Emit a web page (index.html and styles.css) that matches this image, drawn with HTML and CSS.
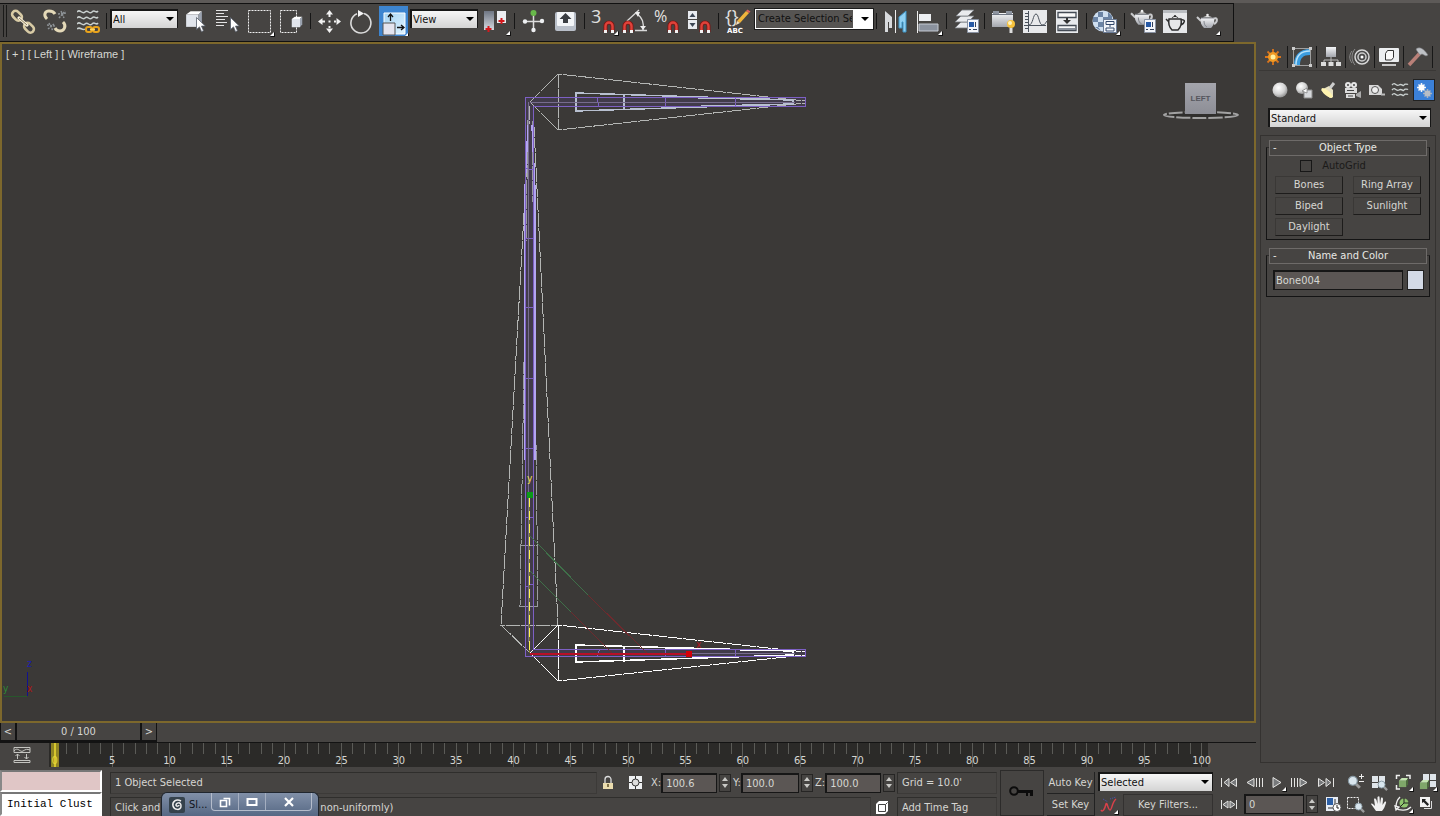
FILE: index.html
```html
<!DOCTYPE html>
<html lang="en">
<head>
    <title>Left - Wireframe</title>
    <meta charset="utf-8">
    <link rel="stylesheet" href="styles.css">
</head>
<body>
<svg class="defs" aria-hidden="true">
    <linearGradient id="steel" x2="0" y2="1"><stop stop-color="#f4f5f7"/><stop offset="1" stop-color="#a3a6ad"/></linearGradient>
    <linearGradient id="slate" x2="0" y2="1"><stop stop-color="#6f7683"/><stop offset="1" stop-color="#d5d9e0"/></linearGradient>
    <linearGradient id="sky" x2="1" y2="1"><stop stop-color="#a5d4f4"/><stop offset="1" stop-color="#dff3ff"/></linearGradient>
    <radialGradient id="ball" cx=".4" cy=".35" r=".7"><stop stop-color="#fff"/><stop offset=".6" stop-color="#d2d2d2"/><stop offset="1" stop-color="#888"/></radialGradient>
    <symbol id="magnet" viewBox="0 0 12 14">
        <path d="M2.5 12V6a3.5 3.5 0 0 1 7 0v6" fill="none" stroke="#7d1512" stroke-width="4"/>
        <path d="M2.5 10V6a3.5 3.5 0 0 1 7 0v4" fill="none" stroke="#e0423a" stroke-width="2.4"/>
        <path d="M1 10h3v3H1zM8 10h3v3H8z" fill="#f2f2f2"/>
    </symbol>
    <symbol id="cursor" viewBox="0 0 10 16">
        <path d="M.5.5v12l3-2.6 2 4.8 2-1-2-4.6h3.8z" fill="#fff" stroke="#555d6b" stroke-width=".8"/>
    </symbol>
    <symbol id="panel" viewBox="0 0 12 14">
        <path d="M.5.5h11v13H.5z" fill="#f4f6fa" stroke="#8a93a3"/>
        <path d="M2 3h5v5H2z" fill="#2759a5"/><path d="M8.500 3v5M2 10.500h2M6 10.500h4" stroke="#33405a"/>
    </symbol>
    <symbol id="teapot" viewBox="0 0 22 16">
        <path d="M5 8L1 4M17 6c5-3 5 3 1 5" fill="none" stroke="#c9cacc" stroke-width="2"/>
        <path d="M5 5h13c1 5-1 8-3 10H8C5 12 4 9 5 5z" fill="url(#steel)"/>
        <path d="M7 4.500c2-2 7-2 9 0z" fill="#ddd"/><circle cx="11.500" cy="2" r="1.300" fill="#eee"/>
        <path d="M8 8c0 3 1 5 3 6M5 5h13" fill="none" stroke="#85888e"/>
    </symbol>
    <symbol id="fly" viewBox="0 0 5 5"><path d="M5 0v5H0z" fill="#111"/><path d="M4 0v4H0z" fill="#fff"/></symbol>
    <symbol id="waves" viewBox="0 0 22 22">
        <path d="M0 3c3-4 5 3 8 0s4 3 7 0 4 2 6-1M0 9c3-4 5 3 8 0s4 3 7 0 4 2 6-1M0 15c3-4 5 3 8 0s4 3 7 0 4 2 6-1M0 20c3-3 5 2 8 0" fill="none" stroke="#c9d0cf" stroke-width="1.500"/>
    </symbol>
    <symbol id="box" viewBox="0 0 16 16">
        <path d="M1 4l4-3h10l-3 3z" fill="#fff"/><path d="M1 4h11v11H1z" fill="#e1e5ec"/><path d="M12 4l3-3v10l-3 4z" fill="#9ba3b0"/>
    </symbol>
    <symbol id="lens" viewBox="0 0 12 12">
        <path d="M7 7l4 4" stroke="#9a9a9a" stroke-width="2.500"/><circle cx="5" cy="5" r="3.800" fill="#d9e6ee" stroke="#8798a2"/>
    </symbol>
    <symbol id="cube" viewBox="0 0 12 12">
        <path d="M1 4l3-3h7L9 4z" fill="#c5e6b2"/><path d="M1 4h8v7H1z" fill="#7fa76a"/><path d="M9 4l2-3v7l-2 3z" fill="#4b6b3c"/>
    </symbol>
</svg>

<header class="toolbar">
    <div class="tools">
        <span class="grip"></span>
        <button class="tool" aria-label="Link"><svg><g fill="none" stroke="#d8cba5" stroke-width="2.600"><rect x="5" y="7" width="11" height="7" rx="3.500" transform="rotate(45 10 10)"/><rect x="17" y="19" width="11" height="7" rx="3.500" transform="rotate(45 22 22)"/></g><path d="M11 12l10 9" stroke="#f7efd8" stroke-width="3"/><path d="M12 13l8 7" stroke="#8a7d5e"/></svg></button>
        <button class="tool" aria-label="Unlink"><svg><g fill="none" stroke="#e4d9b8" stroke-width="3"><path d="M8 14c-4-4-2-8 2-8 3 0 5 1 6 3"/><path d="M24 17c4 4 1 9-3 9-2 0-4-1-5-3"/></g><path d="M19 9l8-1M20 13l6-7M22 6l3 7M8 20l8 1M9 24l6-5M10 18l4 8" stroke="#8d9296" stroke-width="1.500" stroke-dasharray="2 1"/></svg></button>
        <button class="tool" aria-label="Bind to Space Warp"><svg><use href="#waves" x="6" y="4" width="22" height="22"/><g fill="none" stroke="#e8a31c" stroke-width="2"><rect x="15" y="22" width="6" height="5" rx="2"/><rect x="22" y="22" width="6" height="5" rx="2"/></g><path d="M19 24.500h5" stroke="#ffd35c" stroke-width="2"/></svg></button>
        <i class="sep"></i>
        <span class="drop small"><select aria-label="Selection filter"><option>All</option></select></span>
        <button class="tool" aria-label="Select Object"><svg><use href="#box" x="6" y="5" width="18" height="18"/><use href="#cursor" x="17" y="12" width="10" height="16"/></svg></button>
        <button class="tool" aria-label="Select by Name"><svg><path d="M5 5.500h12M5 8.500h8M5 11.500h12M5 14.500h9M5 17.500h11M5 20.500h8" stroke="#e4e4e4"/><use href="#cursor" x="19" y="12" width="10" height="16"/></svg></button>
        <button class="tool" aria-label="Rectangular Selection Region"><svg><path d="M5.500 5.500h22v22h-22z" fill="none" stroke="#f0f0f0" stroke-dasharray="2 1"/><use href="#fly" x="27" y="27" width="5" height="5"/></svg></button>
        <button class="tool" aria-label="Window Crossing"><svg><path d="M5.500 5.500h16v22h-16z" fill="none" stroke="#f0f0f0" stroke-dasharray="2 1"/><use href="#box" x="16" y="11" width="12" height="12"/></svg></button>
        <i class="sep"></i>
        <button class="tool" aria-label="Select and Move"><svg><path d="M16.500 5l3.500 4.500h-7zM16.500 28l3.500-4.500h-7zM5 16.500L9.500 13v7zM28 16.500L23.500 13v7zM15.500 9h2v3h-2zM15.500 21h2v3h-2zM9 15.500h3v2H9zM21 15.500h3v2h-3zM15.500 15.500h2v2h-2z" fill="#f2f2f2"/></svg></button>
        <button class="tool" aria-label="Select and Rotate"><svg><path d="M19 8.500A10 10 0 1 1 12 8.800" fill="none" stroke="#dcdcdc" stroke-width="1.600"/><path d="M13 5l6 3.500-6 3.500z" fill="#f4f4f4"/></svg></button>
        <button class="tool on" aria-label="Select and Scale"><svg><path d="M7 7h21v21H7z" fill="url(#sky)" stroke="#fff"/><path d="M6 17h12v12H6z" fill="#e4e4ee" stroke="#555"/><path d="M13.500 15V9M11 11l2.500-3 2.500 3M20 21.500h6M24 19l3 2.500-3 2.500" fill="none" stroke="#111" stroke-width="1.300"/><use href="#fly" x="27" y="27" width="5" height="5"/></svg></button>
        <span class="drop small"><select aria-label="Reference coordinate system"><option>View</option></select></span>
        <button class="tool" aria-label="Use Pivot Point Center"><svg><path d="M5 6h10v19H5z" fill="url(#slate)"/><path d="M18 6h9v12h-9z" fill="#eceef2"/><path d="M9.500 21v6M6.500 24h6M22.500 13v6M19.500 16h6" stroke="#d4181c" stroke-width="2"/><use href="#fly" x="27" y="26" width="5" height="5"/></svg></button>
        <i class="sep"></i>
        <button class="tool" aria-label="Select and Manipulate"><svg><path d="M16.500 8v17M8 16.500h17" stroke="#ddd" stroke-width="1.500"/><circle cx="16.500" cy="8" r="3" fill="#68b84a"/><g fill="#eef0f2"><circle cx="8" cy="16.500" r="2.200"/><circle cx="25" cy="16" r="2.200"/><circle cx="16.500" cy="25" r="2.200"/></g></svg></button>
        <button class="tool" aria-label="Keyboard Shortcut Override"><svg><rect x="6" y="7" width="21" height="19" rx="2" fill="#b9bfc9"/><rect x="8" y="7" width="17" height="14" rx="1" fill="#f3f5f8"/><path d="M16.500 8l6 6h-3.500v4h-5v-4h-3.500z" fill="#3a3d42"/></svg></button>
        <i class="sep"></i>
        <button class="tool" aria-label="Snaps Toggle"><svg><text class="glyph" x="4" y="18">3</text><use href="#magnet" x="16" y="15" width="12" height="14"/><use href="#fly" x="27" y="26" width="5" height="5"/></svg></button>
        <button class="tool" aria-label="Angle Snap Toggle"><svg><path d="M8 16L20 5M17 8c7 5 8 10 7 17M16 25.500h12" fill="none" stroke="#d9d9d9" stroke-width="1.300"/><path d="M16 7l5 0-2 5zM21 21l3 4 3-4z" fill="#eee"/><use href="#magnet" x="3" y="15" width="12" height="14"/></svg></button>
        <button class="tool" aria-label="Percent Snap Toggle"><svg><text class="glyph pct" x="3" y="17">%</text><use href="#magnet" x="16" y="15" width="12" height="14"/></svg></button>
        <button class="tool" aria-label="Spinner Snap Toggle"><svg><path d="M5 6h9v8H5zM5 15h9v9H5z" fill="#e8ebf0"/><path d="M6.500 12L9.500 8l3 4zM6.500 18l3 4 3-4z" fill="#3c4654"/><use href="#magnet" x="16" y="15" width="12" height="14"/></svg></button>
        <i class="sep"></i>
        <button class="tool" aria-label="Edit Named Selection Sets"><svg><text class="glyph" x="4" y="18">{}</text><path d="M16 16l9-10 3 2-9 10z" fill="#f0b43c"/><path d="M25 6l1.500-1.500 3 2L28 8z" fill="#e0635a"/><path d="M16 16l-1 4 4-2z" fill="#f6e3c0"/><text class="abc" x="6" y="28">ABC</text></svg></button>
        <span class="drop named"><select aria-label="Named selection sets"><option>Create Selection Set</option></select></span>
        <i class="sep"></i>
        <button class="tool" aria-label="Mirror"><svg><path d="M6 6l7 6v11h-3v-6H9v10H6z" fill="#d8dadd"/><path d="M16.500 5v23" stroke="#eee"/><path d="M27 6l-7 6v11h3v-6h1v10h3z" fill="#8fd0f2" stroke="#3f95c6"/></svg></button>
        <button class="tool" aria-label="Align"><svg><path d="M6.500 6v22" stroke="#eee"/><path d="M8 9h12v7H8z" fill="#edeff2"/><path d="M8 19h19v7H8z" fill="#8b929e" stroke="#c5cad2"/><use href="#fly" x="27" y="26" width="5" height="5"/></svg></button>
        <i class="sep"></i>
        <button class="tool" aria-label="Layer Manager"><svg><g fill="#e9ebee" stroke="#777b82" stroke-width=".8"><path d="M6 23l6-6h13l-6 6z"/><path d="M6 17l6-6h13l-6 6z"/><path d="M7 11l6-6h12l-6 6z"/></g><use href="#panel" x="18" y="14" width="12" height="14"/></svg></button>
        <i class="sep"></i>
        <button class="tool" aria-label="Toggle Ribbon"><svg><path d="M5 8h21v14H5z" fill="url(#steel)"/><path d="M6 6h6v3H6zM19 6h6v3h-6z" fill="#8d94a0"/><path d="M5 9.500h21" stroke="#6f7683"/><circle cx="24" cy="19" r="4" fill="#f7c23c"/><circle cx="23" cy="18" r="2" fill="#fff2bd"/><path d="M22.500 23h3v5h-3z" fill="#ddd"/></svg></button>
        <button class="tool" aria-label="Curve Editor"><svg><path d="M4 5h24v23H4z" fill="#e8e9eb"/><path d="M9.500 6v21M5 20.500h22M6 8.500h3M6 11.500h3M6 14.500h3M6 17.500h3M6 23.500h3M10 20c4 0 4-11 7-11s3 12 7 11c2 0 3-3 4-4" fill="none" stroke="#4b525c"/></svg></button>
        <button class="tool" aria-label="Schematic View"><svg><path d="M5 5h22v23H5z" fill="#e8eaed"/><path d="M7 7.500h18v5H7zM7 20.500h18v5H7z" fill="#f9f9f9" stroke="#444b55" stroke-width="1.300"/><path d="M8 23h16v2H8z" fill="#89909a"/><path d="M16 13v3" stroke="#333" stroke-width="2"/><path d="M12 15h8l-4 4z" fill="#333"/></svg></button>
        <i class="sep"></i>
        <button class="tool" aria-label="Material Editor"><svg><circle cx="14" cy="16" r="10.500" fill="#cfdff0"/><path d="M9 7h5v5H9zM19 7l4 4v3h-4zM4 12h5v5H4zM14 12h5v5h-5zM9 17h5v5H9zM6 22h3l3 4z" fill="#6b84a5"/><path d="M14.500 14.500h13v13h-13z" fill="#f2f5fa" stroke="#6b7c96"/><path d="M17 16.500h8v3h-8zM17 23h8v3h-8zM21 19v3" fill="none" stroke="#33486b"/><use href="#fly" x="27" y="26" width="5" height="5"/></svg></button>
        <i class="sep"></i>
        <button class="tool" aria-label="Render Setup"><svg><use href="#teapot" x="3" y="4" width="23" height="17"/><use href="#panel" x="17" y="14" width="12" height="14"/></svg></button>
        <button class="tool" aria-label="Rendered Frame Window"><svg><path d="M4 5h24v23H4z" fill="#e6e7e9"/><path d="M4 5h24v3H4z" fill="#b9bcc0"/><g fill="none" stroke="#2d2d2d"><path d="M10 14h12c1 5-1 9-3 11h-6c-3-3-4-6-3-11zM10 17l-3-3M22 15c5-1 4 3 0 5" stroke-width="1.500"/><path d="M13 13c1-2 5-2 6 0"/></g><circle cx="16" cy="11" r="1" fill="#222"/></svg></button>
        <button class="tool" aria-label="Render Production"><svg><use href="#teapot" x="5" y="8" width="22" height="16"/><use href="#fly" x="25" y="26" width="5" height="5"/></svg></button>
    </div>
</header>

<main class="workspace">
    <section class="stage">
        <div class="viewport">
            <svg class="scene">
                <g transform="translate(-2 -44)" fill="none" shape-rendering="crispEdges">
                    <path d="M526 98h279v8H534v543h271v8H526z" fill="#413b4a"/>
                    <!-- top bone -->
                    <path class="bone" d="M530 102L558 74L805 101M530 102L558 130L805 103M558 74v56"/>
                    <path class="fin" d="M793 100L576 93v18L793 104v-4M624 94v16M665 97l128 3M670 107l123-3"/>
                    <!-- spine bone -->
                    <path class="bone" d="M530 106L501 625h57L533 106M501 625l29 28 28-28"/>
                    <path class="bone dim" d="M528 120L520 606h18L532 120M521 545h17"/>
                    <path class="tube" d="M528 125L525 190v270M532 125L535 190v270"/>
                    <!-- selected bone -->
                    <path class="bone sel" d="M530 653L558 625L805 652M530 653L558 681L805 655M558 625v56"/>
                    <path class="fin sel" d="M793 651L576 645v17L793 655v-4M624 646v16M665 648l128 3M670 659l123-4"/>
                    <!-- skinned mesh -->
                    <path class="mesh" d="M525.500 97.500h280v9h-272v543h272v7h-280zM597 97l2 9M665.500 97v9M735.500 97v9M597 656l3-7M665.500 649v8M735.500 649v8M525 168l8 2M525 238h8M525 307h8M525 378h8M525 448h8M525 517h8M525 587l8-3"/>
                    <path class="mesh soft" d="M530 102.500h265M528.500 102v540M531 653.500h264"/>
                    <!-- scale gizmo -->
                    <path d="M530 536l58 59M530 571l41 41" stroke="#3f7049"/>
                    <path d="M588 595l59 58M571 612l41 41" stroke="#6e2a2e"/>
                    <path d="M530 654h158" stroke="#b81026" stroke-width="2"/>
                    <path d="M529.500 498v155" stroke="#77711f"/>
                    <path d="M529.500 498v155" stroke="#fff34a" stroke-dasharray="9 4"/>
                    <path d="M527 492h6v6h-6z" fill="#0b9b18"/>
                    <path d="M686 651h6v6h-6z" fill="#d40008"/>
                    <!-- world axis -->
                    <path d="M27.500 672v24" stroke="#12128e"/>
                    <path d="M4 696.500h23" stroke="#28572c"/>
                </g>
                <g transform="translate(-2 -44)" class="axis">
                    <text x="527" y="482" fill="#f5e14a">y</text>
                    <text x="696" y="648" fill="#b0101a">x</text>
                    <text x="27" y="667" fill="#1c1cb0">z</text>
                    <text x="27" y="692" fill="#b01414">x</text>
                    <text x="3" y="692" fill="#2d8a34">y</text>
                </g>
            </svg>
            <div class="label">[ + ] [ Left ] [ Wireframe ]</div>
            <div class="viewcube">
                <svg width="80" height="14"><ellipse cx="40" cy="6" rx="37" ry="3" fill="#302f2d" stroke="#a2a2a2" stroke-width="2" stroke-dasharray="14 2"/></svg>
                <span>LEFT</span>
            </div>
        </div>
        <div class="slider">
            <button class="step" aria-label="Previous frame">&lt;</button>
            <button class="thumb">0 / 100</button>
            <button class="step" aria-label="Next frame">&gt;</button>
        </div>
        <div class="track">
            <button class="mini" aria-label="Open Mini Curve Editor"><svg width="18" height="18"><path d="M1 1.500h16v5H1zM1 14.500h16v2H1zM1 5c4-5 6 2 9 0s4-2 7-1M4.500 13V8M2.500 10l2-2 2 2M13.500 8v5M11.500 11l2 2 2-2" fill="none" stroke="#c4c4c0"/></svg></button>
            <div class="ruler" id="ruler"></div>
        </div>
    </section>

    <aside class="command">
        <nav class="tabs">
            <button aria-label="Create"><svg><path d="M11 3v16M3 11h16M5.500 5.500l11 11M16.500 5.500l-11 11" stroke="#d9741c" stroke-width="1.800"/><circle cx="11" cy="11" r="5" fill="#f09a24"/><circle cx="11" cy="11" r="2.500" fill="#fff0a0"/></svg></button>
            <button aria-label="Modify"><svg><path d="M3 19C3 9 9 3 19 3v6C12 9 9 12 9 19z" fill="#3b9de0"/><path d="M5 19C5 10 10 5 19 5" fill="none" stroke="#b8e2fa" stroke-width="1.500"/><path d="M2.500 3v16M3 2.500h16M3 19.500h16.500V3" fill="none" stroke="#9fa0a0"/><path d="M1 1h3v3H1zM18 1h3v3h-3zM1 18h3v3H1zM18 18h3v3h-3z" fill="#ccc"/></svg></button>
            <button aria-label="Hierarchy"><svg><path d="M6 1h10v10H6z" fill="url(#steel)"/><path d="M11 11v6M4 17v-3h14v3" fill="none" stroke="#bbb"/><path d="M1 16h5v4H1zM8.500 16h5v4h-5zM16 16h5v4h-5z" fill="#ddd"/></svg></button>
            <button aria-label="Motion"><svg><path d="M3 5c-3 4-3 8 0 12M6 3c-4 5-4 11 0 16" fill="none" stroke="#8c8c8c"/><circle cx="13" cy="11" r="7" fill="#4a4a4a" stroke="#d8d8d8" stroke-width="1.500"/><circle cx="13" cy="11" r="4" fill="none" stroke="#ccc" stroke-width="1.500"/><circle cx="13" cy="11" r="1.500" fill="#fff"/></svg></button>
            <button aria-label="Display"><svg><rect x="1" y="2" width="20" height="14" rx="1" fill="#eceef0"/><path d="M4 18h14v2H4z" fill="#c9c9c9"/><path d="M7.500 7.500l2-3h6v7l-2 2.500h-6z" fill="#fafafa" stroke="#333"/></svg></button>
            <button aria-label="Utilities"><svg><path d="M2 19L14 6" stroke="#b98078" stroke-width="3.500"/><path d="M9 3c4-3 8 0 12 6l-2 1-4-2-2 1-3-4z" fill="#bfc2c6" stroke="#77797c" stroke-width=".6"/></svg></button>
        </nav>
        <div class="kinds">
            <button aria-label="Geometry"><svg><circle cx="11" cy="11" r="7.500" fill="url(#ball)"/></svg></button>
            <button aria-label="Shapes"><svg><circle cx="9" cy="9" r="6" fill="url(#ball)"/><path d="M11 11h8v8h-8z" fill="#d7d9dc" stroke="#8b8b8b"/><path d="M9 12l5-3v5z" fill="#fff" stroke="#777" stroke-width=".7"/></svg></button>
            <button aria-label="Lights"><svg><path d="M4 11l8-4 4 4v7l-3 1z" fill="#e9e2c3"/><ellipse cx="10" cy="14" rx="2.500" ry="7" transform="rotate(-50 10 14)" fill="#fff4b0"/><path d="M13 9l4-5" stroke="#ccc" stroke-width="3"/></svg></button>
            <button aria-label="Cameras"><svg><circle cx="7" cy="6" r="3" fill="#e6e6e6"/><circle cx="13" cy="6" r="3" fill="#e6e6e6"/><path d="M4 9h12v5H4zM5 15h9v4H5z" fill="#dcdcdc"/><path d="M15 15l5-3v7l-5-2z" fill="#ababab"/><circle cx="7" cy="6" r="1" fill="#444"/><circle cx="13" cy="6" r="1" fill="#444"/><path d="M6 11.500h7M7 17h5" stroke="#444"/></svg></button>
            <button aria-label="Helpers"><svg><path d="M4 6h9l4 4v6H4z" fill="#d8d8d8"/><circle cx="10" cy="11" r="3.500" fill="#eee" stroke="#555"/><path d="M16 15.500h4" stroke="#bbb" stroke-width="2"/></svg></button>
            <button aria-label="Space Warps"><svg><path d="M3 6c3-4 4 2 7 0s4 2 5 0 3 0 4-1M3 11c3-4 4 2 7 0s4 2 5 0 3 0 4-1M3 16c3-4 4 2 7 0s4 2 5 0 3 0 4-1" fill="none" stroke="#c9d0cf" stroke-width="1.300"/></svg></button>
            <button class="on" aria-label="Systems"><svg><g stroke="#f4f4f4" stroke-width="1.500"><path d="M8.500 4v9M4 8.500h9M5.500 5.500l6 6M11.500 5.500l-6 6"/></g><circle cx="8.500" cy="8.500" r="3" fill="#fff"/><g stroke="#a9b0ba" stroke-width="1.500"><path d="M14.500 10v9M10 14.500h9M11.500 11.500l6 6M17.500 11.500l-6 6"/></g><circle cx="14.500" cy="14.500" r="3" fill="#b8bdc6"/></svg></button>
        </div>
        <span class="drop wide"><select aria-label="System category"><option>Standard</option></select></span>
        <div class="rollouts">
            <section class="rollout">
                <h2>Object Type</h2>
                <label class="auto"><input type="checkbox" disabled>AutoGrid</label>
                <div class="types">
                    <button>Bones</button>
                    <button>Ring Array</button>
                    <button>Biped</button>
                    <button>Sunlight</button>
                    <button>Daylight</button>
                </div>
            </section>
            <section class="rollout">
                <h2>Name and Color</h2>
                <div class="name">
                    <input type="text" value="Bone004" aria-label="Object name">
                    <button class="swatch" aria-label="Object color"></button>
                </div>
            </section>
        </div>
    </aside>
</main>

<footer class="status">
    <div class="listener">
        <div class="macro"></div>
        <input type="text" value="Initial Clust" aria-label="MAXScript listener">
    </div>
    <div class="info">
        <div class="line">
            <p class="well grow">1 Object Selected</p>
            <button class="ico" aria-label="Selection Lock"><svg><path d="M8 11V7.500a3 3 0 0 1 6 0V11" fill="none" stroke="#ddd" stroke-width="1.300"/><path d="M6 11h10v6H6z" fill="#eadcae"/><path d="M11 12v3" stroke="#5b4d25" stroke-width="1.500"/></svg></button>
            <button class="ico gap" aria-label="Absolute Mode Transform"><svg><path d="M5 4h13v13H5z" fill="#eef0f2"/><circle cx="11.500" cy="10.500" r="3.500" fill="#ddd" stroke="#333"/><path d="M11.500 4v3M11.500 14v3M5 10.500h3M15 10.500h3" stroke="#333"/></svg></button>
            <label class="coord">X:<input type="text" value="100.6"><i class="spin"></i></label>
            <label class="coord">Y:<input type="text" value="100.0"><i class="spin"></i></label>
            <label class="coord">Z:<input type="text" value="100.0"><i class="spin"></i></label>
            <p class="well side">Grid = 10.0'</p>
        </div>
        <div class="line">
            <p class="well grow prompt"><span>Click and</span><span>non-uniformly)</span></p>
            <button class="ico tag" aria-label="Adaptive Degradation"><svg><path d="M5 7l3-3h9v10l-3 3H5z" fill="#fff"/><path d="M7.500 7.500h7v7h-7zM14.500 7.500l2-2" fill="#fdfdfd" stroke="#444"/></svg></button>
            <p class="well side">Add Time Tag</p>
        </div>
    </div>
    <button class="bigkey" aria-label="Set Keys"><svg width="26" height="12"><circle cx="5" cy="6" r="3.800" fill="none" stroke="#0c0c0c" stroke-width="2"/><path d="M9 5h15v6h-3V8h-2v3h-2V8H9z" fill="#0c0c0c"/></svg></button>
    <div class="keys">
        <button>Auto Key</button>
        <button>Set Key</button>
    </div>
    <div class="filters">
        <span class="drop keyset"><select aria-label="Key set"><option>Selected</option></select></span>
        <div class="line">
            <button class="ico" aria-label="Default tangents"><svg><path d="M3 16c2 3 4-2 5-6 1-3 2 6 4 6s2-8 6-11" fill="none" stroke="#d8414a" stroke-width="1.500"/><path d="M5 5l5 3M12 5l6-2" stroke="#4a54b8" stroke-dasharray="1 1"/><use href="#fly" x="16" y="16" width="5" height="5"/></svg></button>
            <button class="flat">Key Filters...</button>
        </div>
    </div>
    <div class="play">
        <div class="line">
            <button class="ico end" aria-label="Go to Start"><svg><path class="vcr" d="M3.500 7v9M11 7.500v8l-5-4zM18.500 7.500v8l-6-4z"/></svg></button>
            <button class="ico" aria-label="Previous Frame"><svg><path class="vcr" d="M10 7.500v8l-7-4zM12.500 7v9M15.500 7v9M18.500 7v9"/></svg></button>
            <button class="ico" aria-label="Play"><svg><path class="vcr" d="M7 6.500l8 5-8 5z"/><use href="#fly" x="16" y="16" width="5" height="5"/></svg></button>
            <button class="ico" aria-label="Next Frame"><svg><path class="vcr" d="M12 7.500v8l7-4zM3.500 7v9M6.500 7v9M9.500 7v9"/></svg></button>
            <button class="ico end" aria-label="Go to End"><svg><path class="vcr" d="M18.500 7v9M11 7.500v8l5-4zM3.500 7.500v8l6-4z"/></svg></button>
        </div>
        <div class="line">
            <button class="ico end" aria-label="Key Mode"><svg><path class="vcr" d="M3.500 7v9M10 8v7l-5-3.500zM12 8v7l5-3.500zM18.500 7v9"/></svg></button>
            <label class="coord frame"><input type="text" value="0" aria-label="Current frame"><i class="spin"></i></label>
            <button class="ico" aria-label="Time Configuration"><svg><path d="M4 4h12v14H4z" fill="#e8edf4"/><path d="M5 5h6v7H5z" fill="#2d60a6"/><path d="M13 6v6M6 15h5" stroke="#333"/><circle cx="15" cy="14.500" r="4" fill="#fff" stroke="#555"/><path d="M15 12v3h2" fill="none" stroke="#222"/></svg></button>
        </div>
    </div>
    <div class="nav">
        <button class="ico" aria-label="Zoom"><svg><use href="#lens" x="3" y="4" width="14" height="14"/><path d="M15 5.500h5M17.500 3v5M15 10.500h5" stroke="#eee"/></svg></button>
        <button class="ico" aria-label="Zoom All"><svg><path d="M4 5h6v6H4zM11 5h6v6h-6zM4 12h6v5H4z" fill="#dfe5ea"/><use href="#lens" x="9" y="9" width="11" height="11"/></svg></button>
        <button class="ico" aria-label="Zoom Extents"><svg><path d="M4.500 8V4.500H8M14 4.500h4V8M4.500 14v4H8" fill="none" stroke="#eee" stroke-width="1.500"/><use href="#cube" x="6" y="6" width="11" height="11"/><use href="#fly" x="17" y="16" width="5" height="5"/></svg></button>
        <button class="ico" aria-label="Zoom Extents All"><svg><path d="M7 3h6v6H7zM14 3h6v6h-6zM14 10h6v6h-6z" fill="#dfe5ea"/><use href="#cube" x="3" y="8" width="11" height="11"/><use href="#fly" x="17" y="16" width="5" height="5"/></svg></button>
        <button class="ico" aria-label="Zoom Region"><svg><path d="M3.500 4.500h11v11h-11z" fill="none" stroke="#eee" stroke-dasharray="2 1"/><use href="#lens" x="10" y="9" width="11" height="11"/></svg></button>
        <button class="ico" aria-label="Pan View"><svg><path d="M8 18l-5-7c1-1 2 0 4 2L6 6c1-1 2 0 2.500 1L9.500 11V4c1-1 2-1 2 0l.5 7 1-6c1-1 2 0 2 1l-.5 6 2-3c1-1 2 0 1.500 1-1 3-2 6-4 8z" fill="#f0f0f0"/></svg></button>
        <button class="ico" aria-label="Orbit"><svg><circle cx="12" cy="10" r="4.500" fill="#8fc46e"/><path d="M12 10V5M12 10h5M12 10l-4 4" stroke="#222"/><path d="M3 15c5 3 12 3 16-1M8 4c-3 3-4 6-4 10M3 13l4 1-3 3z" fill="none" stroke="#eee" stroke-width="1.300"/><use href="#fly" x="17" y="16" width="5" height="5"/></svg></button>
        <button class="ico" aria-label="Maximize Viewport"><svg><path d="M4 4h10v10H4z" fill="#f2f2f2"/><path d="M6 6h4L9 7.200l4 4L11.500 13l-4-4L6 10z" fill="#222"/><path d="M15.500 8v7.500H8" fill="none" stroke="#ddd"/></svg></button>
    </div>
    <!-- minimized slate window -->
    <div class="minwin">
        <svg width="18" height="18"><rect x="1" y="1" width="16" height="16" rx="2" fill="#35424c"/><path d="M13 5C8 2 4 6 5 10s8 5 8 0-5-3-5-1 3 1 3 0" fill="none" stroke="#eee" stroke-width="1.500"/></svg>
        <span>Sl...</span>
        <div class="caps">
            <button aria-label="Restore"><svg><path d="M5.500 3.500h6v7M2.500 5.500h6v6h-6z" fill="none" stroke="#fff" stroke-width="1.600"/></svg></button>
            <button aria-label="Maximize"><svg><path d="M2.500 4h9v6h-9z" fill="none" stroke="#fff" stroke-width="2"/></svg></button>
            <button class="close" aria-label="Close"><svg><path d="M3 3l8 8M11 3l-8 8" stroke="#fff" stroke-width="2.200"/></svg></button>
        </div>
    </div>
</footer>

<script type="text/javascript">
    let ruler = document.getElementById("ruler");

    for (let i = 0; i <= 100; i++) {
        let tick = document.createElement("span");
        if (i % 5 === 0) {
            tick.className = "major";
            tick.textContent = i;
        }
        if (i === 0) {
            tick.classList.add("now");
        }
        ruler.appendChild(tick);
    }
</script>
</body>
</html>
```

FILE: styles.css
```css
* {
    box-sizing: border-box;
}

body {
    margin: 0;
    min-height: 100vh;
    display: flex;
    flex-direction: column;
    background: #464442;
    color: #d6d6d2;
    font: 11px/16px "DejaVu Sans Condensed", "Noto Sans", sans-serif;
}

button,
input,
select {
    margin: 0;
    padding: 0;
    border: 0;
    border-radius: 0;
    background: none;
    color: inherit;
    font: inherit;
}

p,
h2 {
    margin: 0;
    font: inherit;
}

.defs {
    position: absolute;
    width: 0;
    height: 0;
}

/* main toolbar */
.toolbar {
    border-top: 3px solid #5d5a58;
}

.tools {
    display: flex;
    align-items: center;
    width: max-content;
    height: 39px;
    padding: 0 10px 3px 0;
    border: solid #111;
    border-width: 1px 1px 1px 0;
}

.grip {
    width: 4px;
    height: 32px;
    margin: 0 0 0 3px;
    border: solid #1a1a19;
    border-width: 0 1px;
}

.tool {
    width: 32px;
    height: 34px;
    flex: none;
}

.tool svg {
    display: block;
    width: 32px;
    height: 32px;
}

.tool.on {
    height: 32px;
    background: #3d85d0;
    background-clip: content-box;
    padding: 1px 1px 1px 2px;
}

.tool.on svg {
    height: 30px;
    margin-left: -2px;
}

.sep {
    width: 6px;
    height: 16px;
    flex: none;
    background: linear-gradient(#161616, #161616) 3px 0 / 1px 100% no-repeat;
}

.glyph {
    fill: #dededc;
    font: 18px "Noto Sans", sans-serif;
}

.pct {
    font-size: 16px;
}

.abc {
    fill: #fff;
    font: bold 7px "DejaVu Sans", sans-serif;
}

.drop {
    position: relative;
    display: block;
}

.drop select {
    display: block;
    width: 100%;
    height: 19px;
    padding: 0 16px 0 1px;
    appearance: none;
    background: linear-gradient(#f6f6f6, #d4d4d4);
    border: solid #161616;
    border-width: 2px 1px 0 2px;
    color: #111;
    text-overflow: clip;
}

.drop::after {
    content: "";
    position: absolute;
    right: 4px;
    top: 8px;
    border: 4px solid transparent;
    border-top-color: #000;
    border-bottom: 0;
}

.small {
    width: 68px;
    margin: 0 1px 5px;
}

.named {
    width: 118px;
    margin: 0 0 5px 2px;
}

.named select {
    height: 20px;
    padding: 0 20px 0 2px;
    background: linear-gradient(90deg, #565452 97px, #fff 97px);
    border: 1px solid #fff;
    outline: 1px solid #1a1a1a;
}

/* viewport and command panel */
.workspace {
    flex: 1;
    display: flex;
}

.stage {
    flex: 1;
    min-width: 0;
    display: flex;
    flex-direction: column;
}

.viewport {
    position: relative;
    flex: 1;
    min-height: 300px;
    overflow: hidden;
    background: #3b3937;
    border: 2px solid #7d682c;
}

.scene {
    position: absolute;
    width: 100%;
    height: 100%;
}

.bone {
    stroke: #b4b6b4;
    stroke-dasharray: 14 1;
}

.bone.dim {
    stroke: #9a9ca0;
}

.fin {
    stroke: #b8c0d0;
    stroke-width: 1.5;
}

.bone.sel,
.fin.sel {
    stroke: #fff;
}

.tube {
    stroke: #b3a6f0;
    stroke-width: 1.5;
}

.mesh {
    stroke: #7d60c4;
}

.mesh.soft {
    stroke: #776c8e;
}

.axis {
    font: 10px "DejaVu Sans Condensed", "Noto Sans", sans-serif;
}

.label {
    position: absolute;
    left: 4px;
    top: 2px;
    font-family: "Liberation Sans", sans-serif;
}

.viewcube {
    position: absolute;
    top: 39px;
    right: 13px;
    width: 80px;
    height: 40px;
}

.viewcube svg {
    position: absolute;
    left: 0;
    top: 26px;
}

.viewcube span {
    position: absolute;
    left: 24px;
    top: 0;
    width: 31px;
    height: 31px;
    background: linear-gradient(#a4a5ac, #8d8e96);
    color: #55565e;
    font: bold 8px/31px "Liberation Sans", sans-serif;
    text-align: center;
}

.slider {
    display: flex;
    height: 19px;
}

.slider button {
    border: solid #131313;
    border-width: 0 1px 2px;
}

.step {
    width: 16px;
}

.thumb {
    width: 125px;
}

.track {
    display: flex;
    height: 25px;
    border-top: 1px solid #131313;
}

.mini {
    width: 49px;
    padding-right: 6px;
    flex: none;
}

.mini svg {
    display: block;
    margin: auto;
}

.ruler {
    flex: 1;
    display: flex;
    margin-right: 48px;
    background: #2b2a28;
}

.ruler span {
    flex: 1 1 0;
    min-width: 0;
    display: flex;
    justify-content: center;
    padding-top: 10px;
    background: linear-gradient(#5b5b57, #5b5b57) center top / 1px 11px no-repeat;
    white-space: nowrap;
}

.ruler .major {
    background-size: 1px 100%;
}

.ruler .now {
    background: linear-gradient(90deg, #908524 3px, #d6c62e 3px 5px, #908524 5px) center / 8px 100% no-repeat;
    color: #e6d838;
}

.command {
    width: 184px;
    padding: 4px 4px 4px 4px;
    display: flex;
    flex-direction: column;
}

.tabs {
    display: flex;
    height: 25px;
    margin-left: -1px;
    border-bottom: 1px solid #3a3836;
}

.tabs button {
    width: 29px;
    height: 22px;
    flex: none;
    border-right: 1px solid #181818;
}

.command button svg {
    display: block;
    width: 22px;
    height: 22px;
    margin: auto;
}

.kinds {
    display: flex;
    margin: 8px 0 7px 9px;
}

.kinds button {
    width: 22px;
    height: 22px;
    margin-right: 2px;
    flex: none;
}

.kinds .on {
    background: #3b80d8;
    outline: 1px solid #222;
    outline-offset: -1px;
}

.wide {
    margin: 0 5px 8px 8px;
}

.rollouts {
    flex: 1;
    padding: 4px 5px 0 5px;
    border: 1px solid #343230;
}

.rollout {
    margin: 7px 0 15px;
    border: 1px solid #141414;
    border-top-color: #2c2b2a;
}

.rollout h2 {
    position: relative;
    height: 16px;
    margin: -8px 2px 0;
    background: #464442;
    border: 1px solid #6e6b69;
    color: #e8e8e4;
    line-height: 14px;
    text-align: center;
}

.rollout h2::before {
    content: "-";
    position: absolute;
    left: 3px;
}

.auto {
    display: flex;
    align-items: center;
    justify-content: center;
    gap: 10px;
    height: 20px;
    padding-right: 30px;
    color: #1b1a19;
}

.auto input {
    width: 12px;
    height: 12px;
    appearance: none;
    border: 1px solid #171717;
}

.types {
    display: grid;
    grid-template-columns: 1fr 1fr;
    gap: 3px 10px;
    padding: 0 8px 3px;
}

.types button {
    height: 18px;
    border: 1px solid #3a3836;
    border-right-color: #1d1c1b;
    border-bottom-color: #1d1c1b;
}

.name {
    display: flex;
    gap: 4px;
    padding: 6px 5px 6px 6px;
}

.name input,
.coord input {
    min-width: 0;
    background: #5b5654;
    border: solid #161616;
    border-width: 2px 1px 1px 2px;
}

.name input {
    flex: 1;
    height: 20px;
    padding-left: 1px;
}

.swatch {
    width: 17px;
    height: 20px;
    background: #d3dae6;
    border: 1px solid #222;
}

/* status bar */
.status {
    position: relative;
    display: flex;
    height: 49px;
    overflow: hidden;
    padding-top: 3px;
}

.listener {
    width: 102px;
    margin-right: 8px;
    flex: none;
}

.macro {
    height: 22px;
    background: #e0c6c6;
    border: 2px solid #fff;
    border-top-color: #777;
    border-left-color: #888;
}

.listener input {
    width: 100%;
    height: 24px;
    padding-left: 5px;
    background: #fff;
    border: 2px solid #fff;
    border-top-color: #777;
    border-left-color: #888;
    color: #000;
    font: 11px "Liberation Mono", monospace;
}

.info {
    flex: 1;
    min-width: 0;
}

.line {
    display: flex;
    align-items: center;
}

.info .line {
    height: 25px;
}

.well {
    height: 22px;
    padding: 2px 0 0 4px;
    border: 1px solid #2f2e2c;
    border-right-color: #3c3a38;
    border-bottom-color: #3c3a38;
}

.grow {
    flex: 1;
    min-width: 0;
}

.side {
    width: 100px;
    margin-right: 3px;
}

.prompt {
    display: flex;
    justify-content: flex-start;
    gap: 160px;
    white-space: nowrap;
}

.ico {
    width: 22px;
    height: 22px;
    flex: none;
}

.ico svg {
    display: block;
    width: 22px;
    height: 22px;
    margin: auto;
}

.gap {
    margin: 0 5px;
}

.tag {
    margin-right: 4px;
}

.coord {
    display: flex;
    align-items: center;
    width: 82px;
}

.coord input {
    flex: 1;
    height: 20px;
    padding-left: 3px;
}

.spin {
    width: 12px;
    height: 18px;
    margin: 0 2px;
    border: 1px solid #262524;
    background: #464442;
    display: grid;
    place-content: center;
    gap: 3px;
}

.spin::before,
.spin::after {
    content: "";
    border: 3px solid transparent;
}

.spin::before {
    border-top: 0;
    border-bottom: 4px solid #c9c9c6;
}

.spin::after {
    border-bottom: 0;
    border-top: 4px solid #c9c9c6;
}

.bigkey {
    width: 44px;
    margin-right: 3px;
    border: 1px solid #2c2b2a;
}

.keys {
    display: grid;
    grid-template-rows: 22px 1fr;
    width: 48px;
    margin: 2px 3px 0 0;
}

.keys button {
    border: solid #222;
    border-width: 0 1px 1px 0;
    white-space: nowrap;
}

.filters {
    width: 115px;
    padding-top: 2px;
}

.flat {
    width: 90px;
    height: 22px;
    margin-left: auto;
    border: 1px solid #333130;
}

.keyset {
    margin-bottom: 3px;
}

.play {
    width: 131px;
    padding-top: 1px;
}

.play .end {
    width: 31px;
}

.vcr {
    fill: #77797b;
    stroke: #e4e4e2;
}

.frame {
    width: 76px;
    margin-right: 2px;
}

.nav {
    display: grid;
    grid-template-columns: repeat(4, 24px);
    grid-auto-rows: 22px;
    padding-top: 1px;
}

.minwin {
    position: absolute;
    left: 161px;
    bottom: 0;
    display: flex;
    align-items: center;
    width: 158px;
    height: 24px;
    padding-left: 6px;
    background: linear-gradient(#8190a8, #566884);
    border: 1px solid #20262e;
    border-bottom: 0;
    border-radius: 6px 6px 0 0;
    color: #10141a;
}

.minwin > span {
    width: 25px;
    padding-left: 3px;
}

.caps {
    display: flex;
    align-self: flex-start;
    height: 18px;
    border: 1px solid #b4bccb;
    border-top: 0;
    border-radius: 0 0 4px 4px;
}

.caps button {
    width: 27px;
    border-right: 1px solid #a4aec0;
}

.caps .close {
    width: 45px;
    border-right: 0;
}

.caps svg {
    display: block;
    width: 14px;
    height: 14px;
    margin: auto;
}
```
